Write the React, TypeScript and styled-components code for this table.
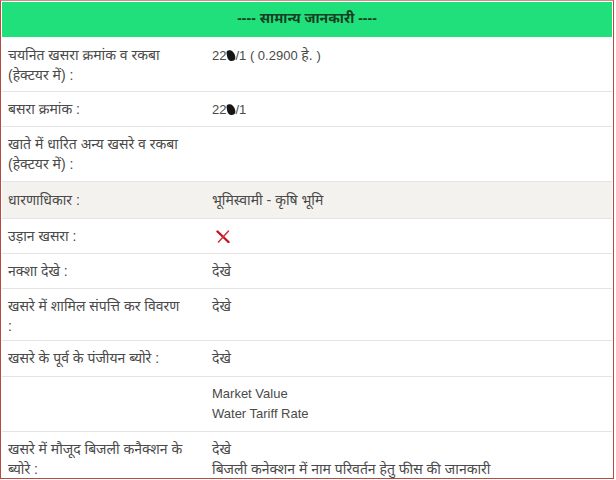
import React from "react";
import styled, { createGlobalStyle } from "styled-components";

const Global = createGlobalStyle`
  html, body { margin: 0; padding: 0; background: #ffffff; }
  body { font-family: "Liberation Sans", Arial, "Noto Sans Devanagari", "Noto Sans", sans-serif; }
`;

const Frame = styled.div`
  box-sizing: border-box;
  width: 614px;
  height: 479px;
  border: 1px solid #b84a45;
  border-top-color: #c9908a;
  padding: 1px;
  overflow: hidden;
  background: #fff;
`;

const Header = styled.div`
  height: 35px;
  background: #1fe07a;
  display: flex;
  align-items: center;
  justify-content: center;
  font-size: 14px;
  font-weight: bold;
  color: #173d22;
  margin-bottom: 1px;
`;

const Row = styled.div<{ $shade?: boolean; $pt?: number; $pb?: number }>`
  display: grid;
  grid-template-columns: 204px 1fr;
  padding: ${(p) => p.$pt ?? 7}px 0 ${(p) => p.$pb ?? 7}px 0;
  border-bottom: 1px solid #e4e4e0;
  background: ${(p) => (p.$shade ? "#f4f2ee" : "#fff")};
  font-size: 14px;
  line-height: 20px;
  color: #4a4a4a;
  &:last-child { border-bottom: none; }
`;

const Label = styled.div`
  padding: 0 21px 0 6px;
`;

const Value = styled.div`
  padding-left: 6px;
  display: flex;
  flex-direction: column;
`;

const Latin = styled.span`
  font-size: 13px;
`;

const Smudge = styled.span`
  display: inline-block;
  width: 8px;
  height: 11px;
  background: #151515;
  border-radius: 30% 70% 40% 50%;
  transform: rotate(-10deg);
  margin: 0 0 0 1px;
  vertical-align: -1px;
`;

const Cross = styled.svg`
  width: 14px;
  height: 13px;
  margin: 4px 0 0 4px;
`;

const RedX = () => (
  <Cross viewBox="0 0 14 13">
    <path d="M1.5 1.5 L12.5 12" stroke="#c3141d" strokeWidth="2.4" strokeLinecap="round" />
    <path d="M12.5 1 L2.5 12" stroke="#d2333a" strokeWidth="1.5" strokeLinecap="round" />
  </Cross>
);

export default function App() {
  return (
    <>
      <Global />
      <Frame>
        <Header>---- सामान्य जानकारी ----</Header>
        <Row $pb={6}>
          <Label>चयनित खसरा क्रमांक व रकबा (हेक्टयर में) :</Label>
          <Value>
            <span>
              <Latin>22</Latin>
              <Smudge />
              <Latin>/1 ( 0.2900 </Latin>हे. <Latin>)</Latin>
            </span>
          </Value>
        </Row>
        <Row $pb={6}>
          <Label>बसरा क्रमांक :</Label>
          <Value>
            <span>
              <Latin>22</Latin>
              <Smudge />
              <Latin>/1</Latin>
            </span>
          </Value>
        </Row>
        <Row>
          <Label>खाते में धारित अन्य खसरे व रकबा (हेक्टयर में) :</Label>
          <Value />
        </Row>
        <Row $shade $pt={8} $pb={8}>
          <Label>धारणाधिकार :</Label>
          <Value>भूमिस्वामी - कृषि भूमि</Value>
        </Row>
        <Row>
          <Label>उड़ान खसरा :</Label>
          <Value>
            <RedX />
          </Value>
        </Row>
        <Row>
          <Label>नक्शा देखे :</Label>
          <Value>देखे</Value>
        </Row>
        <Row $pb={4}>
          <Label>खसरे में शामिल संपत्ति कर विवरण :</Label>
          <Value>देखे</Value>
        </Row>
        <Row $pb={8}>
          <Label>खसरे के पूर्व के पंजीयन ब्योरे :</Label>
          <Value>देखे</Value>
        </Row>
        <Row>
          <Label />
          <Value>
            <Latin>Market Value</Latin>
            <Latin>Water Tariff Rate</Latin>
          </Value>
        </Row>
        <Row $pb={2}>
          <Label>खसरे में मौजूद बिजली कनैक्शन के ब्योरे :</Label>
          <Value>
            <span>देखे</span>
            <span>बिजली कनेक्शन में नाम परिवर्तन हेतु फीस की जानकारी</span>
          </Value>
        </Row>
      </Frame>
    </>
  );
}
